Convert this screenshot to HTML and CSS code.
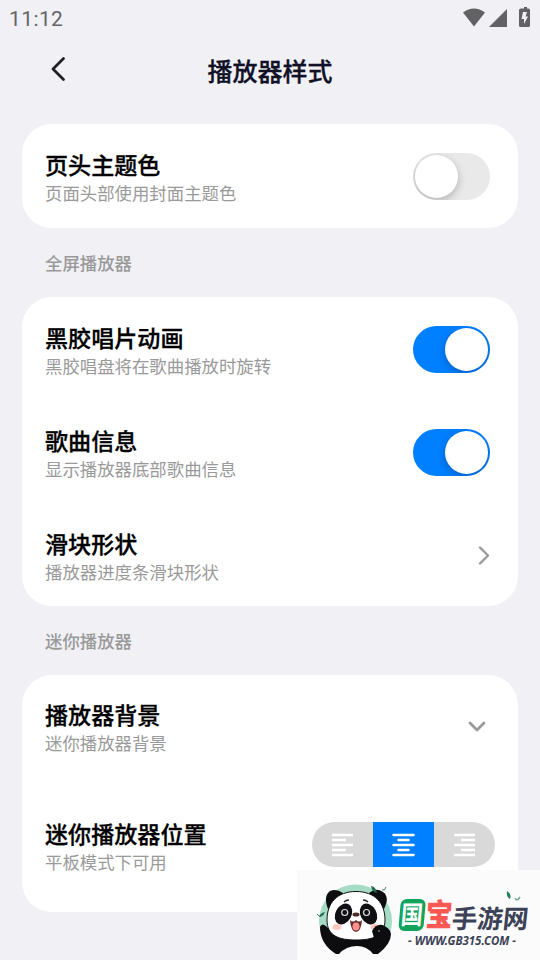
FILE: index.html
```html
<!DOCTYPE html>
<html lang="zh-CN">
<head>
<meta charset="utf-8">
<title>播放器样式</title>
<link rel="stylesheet" href="styles.css">
</head>
<body>
<div class="status">
  <span class="clock">11:12</span>
  <svg width="70" height="22" viewBox="0 0 70 22" fill="#626264">
    <path d="M1 5.500Q12 -2.500 23 5.500L12 19.500Z"/>
    <path d="M45 2V20H27Z"/>
    <path d="M59 1.500h3V0h3v1.500h1.500q1.500 0 1.500 1.500v15.500q0 1.500-1.500 1.500h-8q-1.500 0-1.500-1.500v-15.500q0-1.500 2-1.500z"/>
    <path d="M61 5L59.500 12H62V17L66 9.500H63.500L65 5Z" fill="#f0f0f5"/>
  </svg>
</div>
<header class="header">
  <svg class="back" width="20" height="28" viewBox="0 0 20 28"><path d="M15.500 3.500L5 14L15.500 24.500"/></svg>
  <h1>播放器样式</h1>
</header>
<main>
  <section class="card single">
    <div class="row">
      <div class="label"><h2>页头主题色</h2><p>页面头部使用封面主题色</p></div>
      <div class="toggle"><i></i></div>
    </div>
  </section>
  <h3>全屏播放器</h3>
  <section class="card">
    <div class="row">
      <div class="label"><h2>黑胶唱片动画</h2><p>黑胶唱盘将在歌曲播放时旋转</p></div>
      <div class="toggle on"><i></i></div>
    </div>
    <div class="row">
      <div class="label"><h2>歌曲信息</h2><p>显示播放器底部歌曲信息</p></div>
      <div class="toggle on"><i></i></div>
    </div>
    <div class="row">
      <div class="label"><h2>滑块形状</h2><p>播放器进度条滑块形状</p></div>
      <svg class="chevron" width="14" height="20" viewBox="0 0 14 20"><path d="M4 1.500L12 9.500L4 17.500"/></svg>
    </div>
  </section>
  <h3>迷你播放器</h3>
  <section class="card mini">
    <div class="row">
      <div class="label"><h2>播放器背景</h2><p>迷你播放器背景</p></div>
      <svg class="chevron down" width="18" height="12" viewBox="0 0 18 12"><path d="M2 2L9 9L16 2"/></svg>
    </div>
    <div class="row position">
      <div class="label"><h2>迷你播放器位置</h2><p>平板模式下可用</p></div>
      <div class="segments">
        <div><svg width="23" height="24" viewBox="0 0 23 24"><path d="M1 2H22M1 7H15M1 12H22M1 17H15M1 22H22"/></svg></div>
        <div class="active"><svg class="round" width="23" height="24" viewBox="0 0 23 24"><path d="M1.500 2H21.500M6.500 7H16.500M1.500 12H21.500M6.500 17H16.500M1.500 22H21.500"/></svg></div>
        <div><svg width="23" height="24" viewBox="0 0 23 24"><path d="M1 2H22M8 7H22M1 12H22M8 17H22M1 22H22"/></svg></div>
      </div>
    </div>
  </section>
</main>
<svg class="watermark" width="243" height="90" viewBox="297 870 243 90">
  <rect x="297" y="870" width="243" height="90" fill="#fbfbfb"/>
  <path d="M319 921A36.500 36.500 0 0 1 392 921Q392 932 386 940H326Q319 932 319 921Z" fill="#a6dcc4"/>
  <path d="M328 909Q323 896 330 891Q336 888 343 893L338 904Z" fill="#0d0d10"/>
  <path d="M384 909Q390 897 383 892Q376 887 369 893L375 903Z" fill="#0d0d10"/>
  <path d="M320 927Q322 922 327 927Q337 940 356 940Q368 940 375 934Q375 927 382 926Q389 926 391 934Q391 944 378 954H373Q367 946 357 946Q346 946 339 954H336Q320 944 320 927Z" fill="#0d0d10"/>
  <path d="M356 891.500C375 891.500 385 903 385 920C385 936 373 940 356 940C339 940 327 936 327 920C327 903 337 891.500 356 891.500Z" fill="#fff" stroke="#111" stroke-width="1"/>
  <ellipse cx="343.500" cy="914" rx="8" ry="11" transform="rotate(28 343.500 914)" fill="#101014"/>
  <ellipse cx="368.500" cy="914" rx="8" ry="11" transform="rotate(-28 368.500 914)" fill="#101014"/>
  <g fill="#101014" stroke="#ddd" stroke-width="1.200"><circle cx="344.700" cy="912.500" r="3"/><circle cx="366.500" cy="912.500" r="3"/></g>
  <path d="M344 902q2-2 5-2M363 900q3 0 5 2" fill="none" stroke="#222" stroke-width="1.300"/>
  <ellipse cx="337" cy="927" rx="4.500" ry="3" fill="#ffc6bd"/><ellipse cx="375" cy="927" rx="4.500" ry="3" fill="#ffc6bd"/>
  <path d="M372 931Q377 922 385 926L386 936Q378 941 374 938Z" fill="#0d0d10"/>
  <circle cx="379" cy="931" r="1" fill="#777"/>
  <ellipse cx="356" cy="914.500" rx="3.500" ry="2" fill="#4a2b29"/>
  <path d="M350 920q3 3 6 0 3 3 6 0-1 12-6 12t-6-12z" fill="#652b2c"/>
  <ellipse cx="356" cy="926.500" rx="3.500" ry="4" fill="#ff8f8b"/>
  <path d="M371 886q5 1 6 7-5-1-6-7zM319 917q1-4 6-5-2 5-6 5z" fill="#23694e"/>
  <path d="M382 890q3 1 4-3M317 914l2 2" fill="none" stroke="#477a66"/>
  <path d="M507 891q5 3 3 8-4-2-3-8z" fill="#27815c"/><path d="M515 898q2 4 5-1" fill="none" stroke="#6ea88f" stroke-width="1.500"/>
  <g transform="translate(399 899) skewX(-5)">
    <rect x="2" y="0" width="25" height="32" rx="6" fill="#12a45c"/>
    <text class="brand" transform="translate(3.500 24.800) scale(.93 1.080)" font-size="23.500" fill="#fff">国</text>
  </g>
  <g class="brand">
    <text transform="translate(425.500 926) scale(.9 1.060) skewX(-4)" font-size="29" fill="#fb5751" stroke="#fb5751" stroke-width="1">宝</text>
    <text transform="translate(451 927.500) skewX(-6)" font-size="25.500" fill="#3b4256">手游网</text>
  </g>
  <text class="url" x="408" y="945" textLength="108" lengthAdjust="spacingAndGlyphs">- WWW.GB315.COM -</text>
</svg>
</body>
</html>
```
FILE: styles.css
```css
* { box-sizing: border-box; margin: 0; padding: 0; }
body {
  position: relative;
  width: 540px;
  height: 960px;
  overflow: hidden;
  background: #f0f0f5;
  color: #000;
  font-family: "Noto Sans CJK SC", sans-serif;
}
svg { display: block; flex: none; }
.status {
  display: flex;
  justify-content: space-between;
  height: 40px;
  padding: 7px 8px 0 9px;
}
.clock {
  color: #656567;
  font: 400 21px/24px Roboto, sans-serif;
  letter-spacing: .4px;
}
.header {
  display: grid;
  grid-template-columns: 48px 1fr 48px;
  align-items: center;
  height: 60px;
}
.back {
  margin: -2px 0 0 48px;
  fill: none;
  stroke: #202024;
  stroke-width: 2.8;
  stroke-linecap: round;
  stroke-linejoin: round;
}
h1 {
  margin-top: -1px;
  color: #101027;
  font-size: 25px;
  font-weight: 500;
  line-height: 36px;
  text-align: center;
  -webkit-text-stroke: .3px #101027;
}
main { padding: 24px 22px 0; }
.card { border-radius: 30px; background: #fff; }
.single { height: 104px; }
.row {
  display: flex;
  align-items: center;
  justify-content: space-between;
  height: 103px;
  padding: 2px 28px 0 23px;
}
.label { display: flex; flex-direction: column; padding-top: 1px; }
h2 {
  height: 31px;
  font-size: 23.1px;
  font-weight: 500;
  line-height: 31px;
  -webkit-text-stroke: .3px #000;
}
p { height: 26px; color: #9a9a9a; font-size: 17.4px; font-weight: 400; line-height: 26px; }
h3 {
  height: 69px;
  padding-left: 23px;
  color: #999;
  font-size: 17.4px;
  font-weight: 500;
  line-height: 70px;
}
.toggle {
  display: flex;
  align-items: center;
  width: 77px;
  height: 47px;
  padding: 0 2px;
  overflow: hidden;
  border-radius: 24px;
  background: #e9e9e9;
}
.toggle i {
  width: 43px;
  height: 43px;
  border-radius: 50%;
  background: #fff;
  box-shadow: 0 3px 8px rgba(0, 0, 0, .24);
}
.toggle.on { justify-content: flex-end; background: #007fff; }
.chevron {
  fill: none;
  stroke: #999;
  stroke-width: 2.4;
  stroke-linecap: round;
  stroke-linejoin: round;
}
.down { margin-right: 4px; stroke-width: 2.8; }
.mini { height: 237px; }
.mini .row { padding-top: 0; }
.mini .position { height: 101px; margin-top: 16px; padding-right: 23px; }
.position .label { padding-top: 4px; }
.segments {
  display: flex;
  width: 183px;
  height: 45px;
  overflow: hidden;
  border-radius: 23px;
  background: #d9d9d9;
}
.segments div { display: flex; flex: 1; align-items: center; justify-content: center; }
.segments .active { background: #007fff; }
.segments svg { fill: none; stroke: #fff; stroke-width: 2.5; }
.segments .round { stroke-linecap: round; }
.watermark { position: absolute; right: 0; bottom: 0; }
.brand { font-family: "Noto Sans CJK SC", sans-serif; font-weight: 700; }
.url { fill: #3b4256; font: italic 700 12px "Noto Sans", sans-serif; }
```
